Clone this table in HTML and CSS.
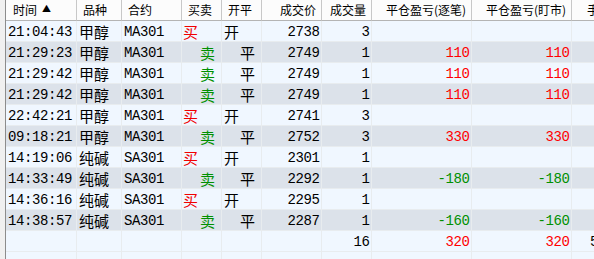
FILE: index.html
```html
<!DOCTYPE html>
<html lang="zh-CN">
<head>
<meta charset="utf-8">
<title>成交记录</title>
<link rel="stylesheet" href="styles.css">
</head>
<body>
<div class="frame">
  <div class="gutter"></div>
  <div class="table">
    <div class="row head">
      <div class="c l">时间 <span class="sort">▲</span></div>
      <div class="c l">品种</div>
      <div class="c l">合约</div>
      <div class="c l">买卖</div>
      <div class="c l">开平</div>
      <div class="c r">成交价</div>
      <div class="c r">成交量</div>
      <div class="c r">平仓盈亏(逐笔)</div>
      <div class="c r">平仓盈亏(盯市)</div>
      <div class="c l last">手续费</div>
    </div>

    <div class="row odd">
      <div class="c">21:04:43</div><div class="c cjk">甲醇</div><div class="c">MA301</div>
      <div class="c cjk buy">买</div><div class="c cjk">开</div>
      <div class="c r">2738</div><div class="c r">3</div><div class="c r"></div><div class="c r"></div><div class="c"></div>
    </div>
    <div class="row even">
      <div class="c">21:29:23</div><div class="c cjk">甲醇</div><div class="c">MA301</div>
      <div class="c cjk sell">卖</div><div class="c cjk ind">平</div>
      <div class="c r">2749</div><div class="c r">1</div><div class="c r red">110</div><div class="c r red">110</div><div class="c"></div>
    </div>
    <div class="row odd">
      <div class="c">21:29:42</div><div class="c cjk">甲醇</div><div class="c">MA301</div>
      <div class="c cjk sell">卖</div><div class="c cjk ind">平</div>
      <div class="c r">2749</div><div class="c r">1</div><div class="c r red">110</div><div class="c r red">110</div><div class="c"></div>
    </div>
    <div class="row even">
      <div class="c">21:29:42</div><div class="c cjk">甲醇</div><div class="c">MA301</div>
      <div class="c cjk sell">卖</div><div class="c cjk ind">平</div>
      <div class="c r">2749</div><div class="c r">1</div><div class="c r red">110</div><div class="c r red">110</div><div class="c"></div>
    </div>
    <div class="row odd">
      <div class="c">22:42:21</div><div class="c cjk">甲醇</div><div class="c">MA301</div>
      <div class="c cjk buy">买</div><div class="c cjk">开</div>
      <div class="c r">2741</div><div class="c r">3</div><div class="c r"></div><div class="c r"></div><div class="c"></div>
    </div>
    <div class="row even">
      <div class="c">09:18:21</div><div class="c cjk">甲醇</div><div class="c">MA301</div>
      <div class="c cjk sell">卖</div><div class="c cjk ind">平</div>
      <div class="c r">2752</div><div class="c r">3</div><div class="c r red">330</div><div class="c r red">330</div><div class="c"></div>
    </div>
    <div class="row odd">
      <div class="c">14:19:06</div><div class="c cjk">纯碱</div><div class="c">SA301</div>
      <div class="c cjk buy">买</div><div class="c cjk">开</div>
      <div class="c r">2301</div><div class="c r">1</div><div class="c r"></div><div class="c r"></div><div class="c"></div>
    </div>
    <div class="row even">
      <div class="c">14:33:49</div><div class="c cjk">纯碱</div><div class="c">SA301</div>
      <div class="c cjk sell">卖</div><div class="c cjk ind">平</div>
      <div class="c r">2292</div><div class="c r">1</div><div class="c r green">-180</div><div class="c r green">-180</div><div class="c"></div>
    </div>
    <div class="row odd">
      <div class="c">14:36:16</div><div class="c cjk">纯碱</div><div class="c">SA301</div>
      <div class="c cjk buy">买</div><div class="c cjk">开</div>
      <div class="c r">2295</div><div class="c r">1</div><div class="c r"></div><div class="c r"></div><div class="c"></div>
    </div>
    <div class="row even">
      <div class="c">14:38:57</div><div class="c cjk">纯碱</div><div class="c">SA301</div>
      <div class="c cjk sell">卖</div><div class="c cjk ind">平</div>
      <div class="c r">2287</div><div class="c r">1</div><div class="c r green">-160</div><div class="c r green">-160</div><div class="c"></div>
    </div>
    <div class="row odd">
      <div class="c"></div><div class="c"></div><div class="c"></div>
      <div class="c"></div><div class="c"></div>
      <div class="c r"></div><div class="c r">16</div><div class="c r red">320</div><div class="c r red">320</div><div class="c fee">5.50</div>
    </div>
    <div class="row odd">
      <div class="c"></div><div class="c"></div><div class="c"></div>
      <div class="c"></div><div class="c"></div>
      <div class="c"></div><div class="c"></div><div class="c"></div><div class="c"></div><div class="c"></div>
    </div>
  </div>
</div>
</body>
</html>
```

FILE: styles.css
```css
html, body {
  margin: 0;
  padding: 0;
  background: #f0f7ff;
}

.frame {
  display: flex;
  width: 594px;
  height: 259px;
  overflow: hidden;
}

.gutter {
  flex: 0 0 5px;
  background: #f0f0f0;
  border-right: 1px solid #8c8c8c;
}

.table {
  flex: 0 0 auto;
  display: flex;
  flex-direction: column;
  background: #f0f7ff;
}

.row {
  display: grid;
  grid-template-columns: 71px 45px 60px 40px 40px 60px 50px 100px 100px 100px;
  height: 21px;
  font-family: "Liberation Mono", "Noto Sans CJK SC", monospace;
  font-size: 14px;
  letter-spacing: -0.4px;
  color: #000;
}

.row.odd { background: #f0f7ff; }
.row.even { background: #dce2ea; }

.c {
  display: flex;
  align-items: center;
  box-sizing: border-box;
  height: 21px;
  padding: 1px 2px 0 2px;
  border-right: 1px solid #e8ecef;
  border-bottom: 1px solid #e8ecef;
  white-space: nowrap;
  overflow: hidden;
}

.c.r { justify-content: flex-end; padding-right: 1.6px; }

.cjk {
  font-family: "Noto Sans CJK SC", sans-serif;
  font-size: 15px;
  letter-spacing: 0;
  padding-top: 0;
}

.buy { color: #f00000; padding-left: 1px; }
.sell { color: #009000; padding-left: 18px; }
.ind { padding-left: 18px; }

.red { color: #ff0000; }
.green { color: #009000; }

.fee { padding-left: 18px; }

.head {
  background: #fcfcfc;
  font-family: "Noto Sans CJK SC", sans-serif;
  font-size: 12px;
  letter-spacing: 0;
}

.head .c {
  border-right: 1px solid #c8c8c8;
  border-bottom: 1px solid #b4b4b4;
  padding: 0 5px 1px 6px;
}

.head .c.l { padding-left: 6px; }
.head .c:first-child { padding-left: 7px; }
.head .c.last { padding-left: 15px; }

.sort {
  font-size: 9px;
  margin-left: 5px;
  margin-top: -2px;
}
```
